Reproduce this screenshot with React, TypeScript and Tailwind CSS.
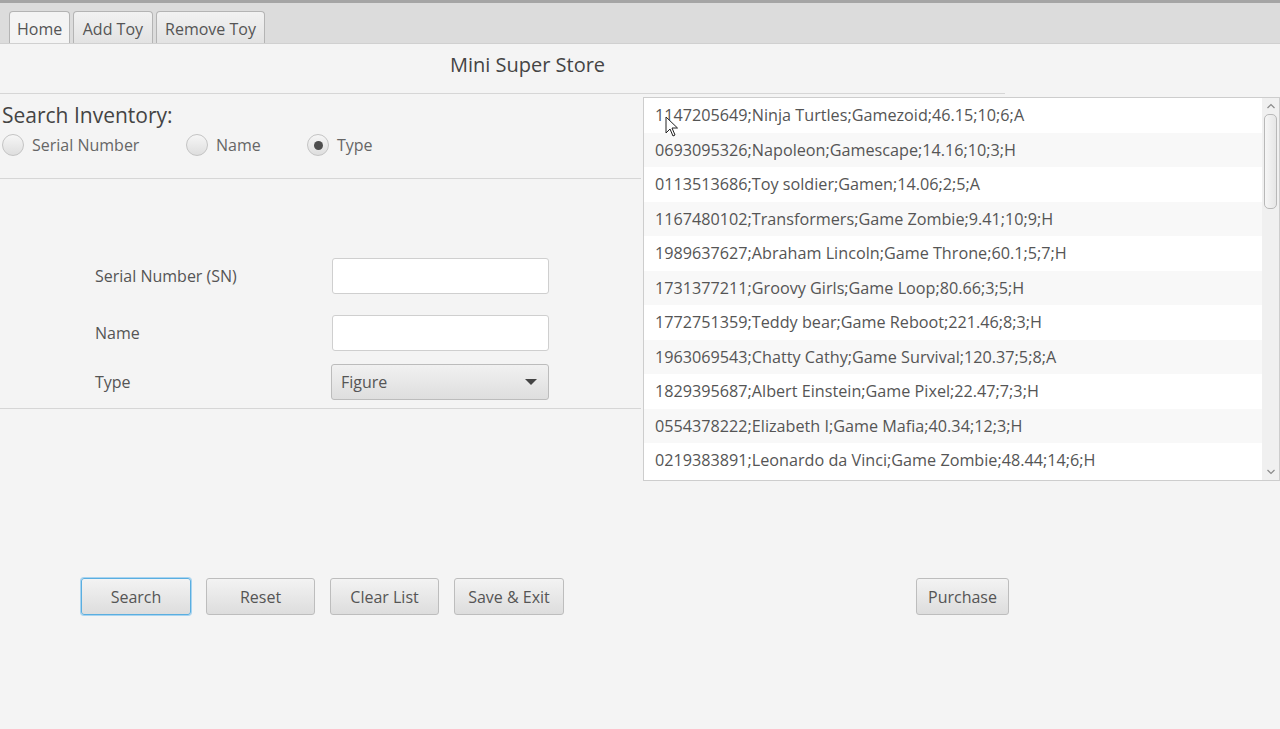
import React from "react";

const font = { fontFamily: '"Open Sans", "Noto Sans", sans-serif' };

const rows = [
  "1147205649;Ninja Turtles;Gamezoid;46.15;10;6;A",
  "0693095326;Napoleon;Gamescape;14.16;10;3;H",
  "0113513686;Toy soldier;Gamen;14.06;2;5;A",
  "1167480102;Transformers;Game Zombie;9.41;10;9;H",
  "1989637627;Abraham Lincoln;Game Throne;60.1;5;7;H",
  "1731377211;Groovy Girls;Game Loop;80.66;3;5;H",
  "1772751359;Teddy bear;Game Reboot;221.46;8;3;H",
  "1963069543;Chatty Cathy;Game Survival;120.37;5;8;A",
  "1829395687;Albert Einstein;Game Pixel;22.47;7;3;H",
  "0554378222;Elizabeth I;Game Mafia;40.34;12;3;H",
  "0219383891;Leonardo da Vinci;Game Zombie;48.44;14;6;H",
];

const Tab = ({ label, active, px }: { label: string; active?: boolean; px: string }) => (
  <div
    className={
      "h-[32px] pt-[2px] flex items-center rounded-t-[4px] border border-b-0 border-[#b4b4b4] text-[16px] text-[#555] " +
      px +
      (active ? " bg-[#f4f4f4]" : " bg-gradient-to-b from-[#f2f2f2] to-[#e2e2e2]")
    }
  >
    {label}
  </div>
);

const Radio = ({ label, checked }: { label: string; checked?: boolean }) => (
  <div className="flex items-center gap-[8px]">
    <div className="w-[22px] h-[22px] rounded-full border border-[#c4c4c4] bg-gradient-to-b from-[#f6f6f6] to-[#dedede] flex items-center justify-center">
      {checked && <div className="w-[9px] h-[9px] rounded-full bg-[#4d4d4d]" />}
    </div>
    <span className="text-[16px] text-[#666]">{label}</span>
  </div>
);

const Button = ({ label, w, focused }: { label: string; w: string; focused?: boolean }) => (
  <div
    className={
      "h-[37px] flex items-center justify-center rounded-[3px] border bg-gradient-to-b from-[#f3f3f3] to-[#dddddd] text-[16px] text-[#555] " +
      w +
      (focused ? " border-[#5aaee0] shadow-[0_0_0_1px_#a8d4f0]" : " border-[#bdbdbd]")
    }
  >
    {label}
  </div>
);

export default function App() {
  return (
    <div className="w-[1280px] h-[729px] bg-[#f4f4f4] overflow-hidden relative" style={font}>
      {/* tab header */}
      <div className="h-[44px] border-t-[3px] border-[#a5a5a5] bg-[#dcdcdc] flex items-end gap-[3px] pl-[9px] border-b border-b-[#d0d0d0]">
        <Tab label="Home" active px="px-[7px]" />
        <Tab label="Add Toy" px="px-[8.5px]" />
        <Tab label="Remove Toy" px="px-[8.5px]" />
      </div>

      {/* title */}
      <div className="h-[50px] flex justify-center border-b border-[#d6d6d6] mr-[275px] pt-[6px]">
        <span className="text-[20px] text-[#444] pl-[50px] leading-[30px]">Mini Super Store</span>
      </div>

      <div className="flex">
        {/* left column */}
        <div className="w-[641px] mt-[2px]">
          <div className="border-b border-[#d6d6d6] h-[83px] pt-[5px]">
            <div className="text-[21px] text-[#444] pl-[2px] leading-[28px]">Search Inventory:</div>
            <div className="flex items-center pl-[2px] mt-[4px]">
              <div className="w-[184px]">
                <Radio label="Serial Number" />
              </div>
              <div className="w-[121px]">
                <Radio label="Name" />
              </div>
              <Radio label="Type" checked />
            </div>
          </div>

          <div className="h-[230px] border-b border-[#d6d6d6] pl-[95px] pt-[79px]">
            <div className="flex items-center h-[36px]">
              <span className="w-[237px] text-[16px] text-[#555]">Serial Number (SN)</span>
              <div className="w-[217px] h-[36px] bg-white border border-[#cfcfcf] rounded-[3px]" />
            </div>
            <div className="flex items-center h-[36px] mt-[21px]">
              <span className="w-[237px] text-[16px] text-[#555]">Name</span>
              <div className="w-[217px] h-[36px] bg-white border border-[#cfcfcf] rounded-[3px]" />
            </div>
            <div className="flex items-center h-[36px] mt-[13px]">
              <span className="w-[236px] text-[16px] text-[#555]">Type</span>
              <div className="w-[218px] h-[36px] rounded-[3px] border border-[#bcbcbc] bg-gradient-to-b from-[#f1f1f1] to-[#dedede] flex items-center justify-between pl-[9px] pr-[11px]">
                <span className="text-[16px] text-[#555]">Figure</span>
                <svg width="12" height="7" viewBox="0 0 12 7">
                  <path d="M0 0 L12 0 L6 6 Z" fill="#444" />
                </svg>
              </div>
            </div>
          </div>
        </div>

        {/* list */}
        <div className="ml-[2px] mt-[3px] w-[637px] h-[384px] border border-[#cdcdcd] bg-white flex">
          <div className="flex-1">
            {rows.map((r, i) => (
              <div
                key={r}
                className={
                  "h-[34.5px] flex items-center pl-[11px] text-[16.2px] text-[#555] " +
                  (i % 2 === 1 ? "bg-[#f8f8f8]" : "bg-white")
                }
              >
                {r}
              </div>
            ))}
          </div>
          <div className="w-[17px] bg-[#f0f0f0] flex flex-col items-center">
            <svg width="10" height="14" viewBox="0 0 10 14" className="mt-[1px]">
              <path d="M1.5 9 L5 5.5 L8.5 9" stroke="#8a8a8a" strokeWidth="1.2" fill="none" />
            </svg>
            <div className="w-[13px] h-[95px] mt-[1px] rounded-[5px] border border-[#b8b8b8] bg-gradient-to-r from-[#f6f6f6] to-[#e6e6e6]" />
            <div className="flex-1" />
            <svg width="10" height="14" viewBox="0 0 10 14" className="mb-[1px]">
              <path d="M1.5 5 L5 8.5 L8.5 5" stroke="#8a8a8a" strokeWidth="1.2" fill="none" />
            </svg>
          </div>
        </div>
      </div>

      {/* buttons */}
      <div className="flex items-center mt-[97px] pl-[81px]">
        <div className="flex gap-[15px]">
          <Button label="Search" w="w-[110px]" focused />
          <Button label="Reset" w="w-[109px]" />
          <Button label="Clear List" w="w-[109px]" />
          <Button label="Save & Exit" w="w-[110px]" />
        </div>
        <div className="ml-[352px]">
          <Button label="Purchase" w="w-[93px]" />
        </div>
      </div>

      {/* mouse cursor */}
      <svg className="absolute left-[665px] top-[116px]" width="14" height="22" viewBox="0 0 14 22">
        <path d="M1 1 L1 17 L5 13 L8 20 L10 19 L7 12 L12.5 12 Z" fill="white" stroke="#222" strokeWidth="1" />
      </svg>
    </div>
  );
}
